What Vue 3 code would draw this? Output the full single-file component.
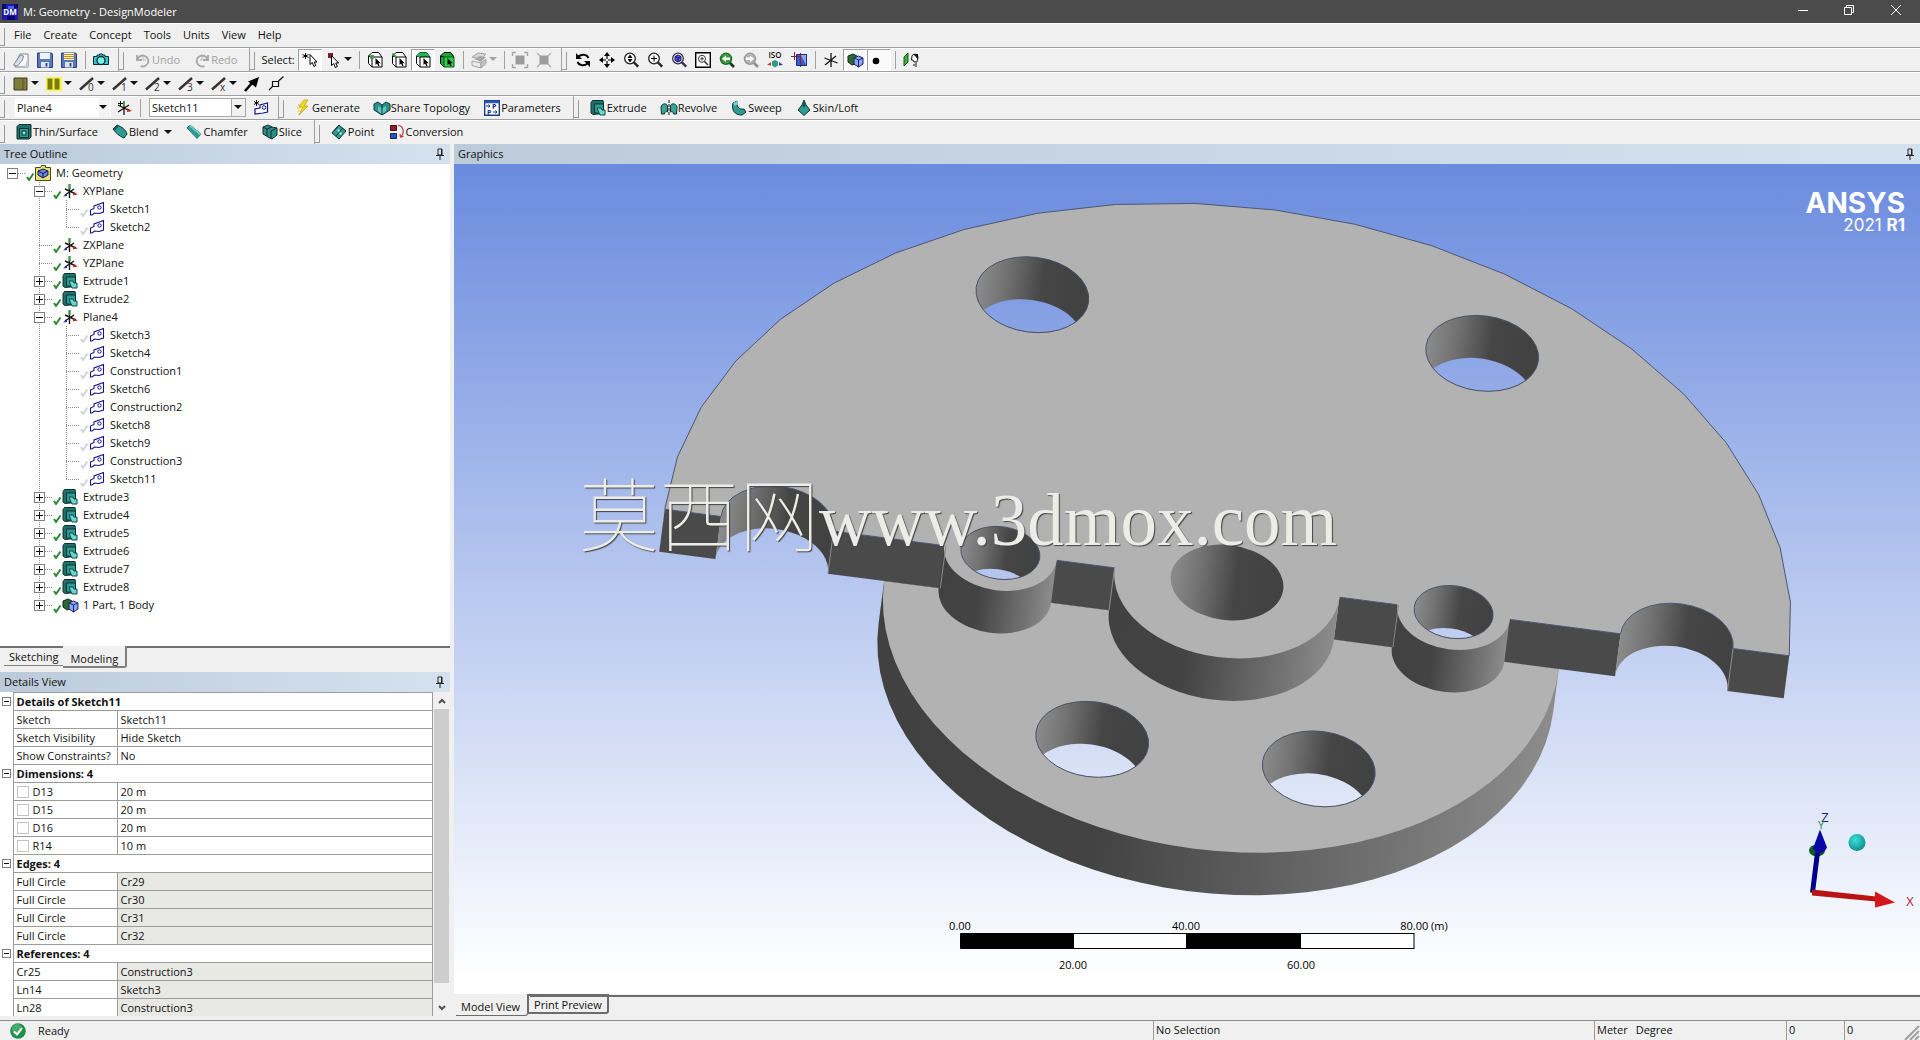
<script setup>
import { ref } from 'vue'

const menus = ['File', 'Create', 'Concept', 'Tools', 'Units', 'View', 'Help']

const cube = (fill) =>
  `<path d="M1 4.5 4.5 1H12l3 3v10.5H5L1 11z" fill="${fill}"/><path d="M1.500 4 5 .5h6.500L15 5M1.500 4v7.500L5 15M1.500 4l3.500 1" fill="none" stroke="#000"/>`
const cursor = '<path d="M8.500 6v7l1.600-1.400 1.200 2.600 1.200-.6-1.100-2.400h2.300z" fill="#000"/>'
const lens = (inner, color = '#222') =>
  `<circle cx="7" cy="6.500" r="5.300" fill="#fff" stroke="${color}" stroke-width="1.300"/><path d="m11 10.500 4.200 4.200" stroke="${color}" stroke-width="2.400"/>${inner}`
const edgeLine = (label) =>
  `<path d="M1 13.500 14 2" stroke="#333" stroke-width="2.400"/><text x="9" y="15" font-size="10" font-family="Open Sans, sans-serif" fill="#333">${label}</text>`

const icons = {
  app: '<rect width="16" height="16" fill="#1b1bb0"/><path d="M0 0h4v5H0zM12 0h4v4h-4zM5 12h8v4H5z" fill="#0a0a6e"/><path d="M6 2h6v3H6z" fill="#4a62e8"/><text x="8" y="11" font-size="8" font-weight="700" text-anchor="middle" font-family="Open Sans, sans-serif" fill="#fff">DM</text>',
  fresh: '<path d="M7 2h8v13H2v-3z" fill="#f8f8fb" stroke="#7a8294"/><path d="M12 15h3V3z" fill="#c2cad8"/><path d="m.5 13 7-10 3 1-1 4-5 6z" fill="#d8dde8" stroke="#8a90a0"/>',
  save: '<path d="M.5 1h14l1 1v13.500H.5z" fill="#5878b8" stroke="#2b437c"/><path d="M3 1h10v6H3z" fill="#eef3fb"/><path d="M4 10h8v5.500H4z" fill="#dce4f2"/><path d="M9.500 11v3.500" stroke="#2b437c" stroke-width="1.800"/>',
  saveas: '<path d="M.5 1h14l1 1v13.500H.5z" fill="#5878b8" stroke="#2b437c"/><path d="M3 1h10v7H3z" fill="#fff3d0"/><path d="M3 2.500h10M3 4.500h10M3 6.500h10" stroke="#d08a20"/><path d="M4 10h8v5.500H4z" fill="#dce4f2"/><path d="M9.500 11v3.500" stroke="#2b437c" stroke-width="1.800"/>',
  camera: '<path d="M.5 4.500H4V3h2.500V2h3v1H12v1.500h3.500v8H.5z" fill="#3cc0c8" stroke="#0b2f35"/><circle cx="8" cy="8.500" r="4" fill="#7df0ee" stroke="#0b2f35" stroke-width="1.300"/>',
  undo: '<path d="M2 3v5h5M2.500 7.500a5.500 5.500 0 1 1 3 6.500" fill="none" stroke="#a8a8a8" stroke-width="1.800"/><path d="M8 4v4h3" fill="none" stroke="#b8b8b8"/>',
  redo: '<path d="M14 3v5H9M13.500 7.500a5.500 5.500 0 1 0-3 6.500" fill="none" stroke="#a8a8a8" stroke-width="1.800"/><path d="M8 4v4H6" fill="none" stroke="#b8b8b8"/>',
  pick: '<path d="M3.500 1v6M.5 2.500l6 3M.5 5.500l6-3" stroke="#000"/><path d="M8 2.500v10l2.300-2 1.500 4 2-1-1.600-3.500H15z" fill="#fff" stroke="#000"/>',
  pickbox: '<path d="M2 1h5v5H2z" fill="#7a1f2c"/><path d="M5.500 3.500v10l2.300-2 1.500 4 2-1-1.600-3.500h2.900z" fill="#fff" stroke="#000"/>',
  selPoint: cube('#fff') + '<path d="M5 5h10v10H5z" fill="#fff" stroke="#000"/><circle cx="5" cy="5" r="2.300" fill="#3f9a4a"/>' + cursor,
  selEdge: cube('#fff') + '<path d="M5 5h10v10H5z" fill="#fff" stroke="#000"/><path d="M1.500 1.500 5 5" stroke="#3f9a4a" stroke-width="2"/>' + cursor,
  selFace: cube('#fff') + '<path d="M1 4 4.500.5H12L15 5H5z" fill="#22b455"/><path d="M5 5h10v10H5z" fill="#fff" stroke="#000"/>' + cursor,
  selBody: cube('#1fa83a') + '<path d="M5 5h10v10H5z" fill="#35c94f" stroke="#0a5a18"/>' + cursor,
  boxoff: '<path d="M1 5 7 1l8 1-5 5z" fill="#d8d8d8" stroke="#a4a4a4"/><path d="m3 7 6-3 6 1-5 5z" fill="#a8a8a8"/><path d="m1 9 9 2v5l-9-2.500z" fill="#ececec" stroke="#a4a4a4"/><path d="m10 11 5-4v4.500L10 16z" fill="#c4c4c4" stroke="#a4a4a4"/>',
  expand: '<path d="M3.500 3.500h9v9h-9z" fill="#9c9c9c"/><path d="M.5 4V.5H4M12 .5h3.500V4M15.500 12v3.500H12M4 15.500H.5V12" fill="none" stroke="#a6a6a6" stroke-width="1.400"/>',
  shrink: '<path d="M3.500 3.500h9v9h-9z" fill="#9c9c9c"/><path d="m1 1 3 3M15 1l-3 3M15 15l-3-3M1 15l3-3" stroke="#b0b0b0" stroke-width="1.400"/>',
  rotate: '<path d="M13.500 6C12 2.500 7 1.500 3.500 4.500M2.500 10c1.500 3.500 6.500 4.500 10 1.500" fill="none" stroke="#000" stroke-width="2"/><path d="M1 1v6h6zM15 15V9H9z" fill="#000"/>',
  pan: '<path d="M8 0 5 4h6zM8 16l-3-4h6zM0 8l4-3v6zM16 8l-4-3v6z" fill="#000"/><path d="M8 3v4M8 9v4M3 8h4M9 8h4" stroke="#000" stroke-width="1.200"/>',
  zoom: lens('<path d="M7 2.500 9.500 6h-5zM7 10.500 4.500 7h5z" fill="#000"/>'),
  zoomin: lens('<path d="M7 3.500v6M4 6.500h6" stroke="#000"/>'),
  zoomfit: lens('<path d="m7 3 3 1.500v4L7 10 4 8.500v-4z" fill="#5a5ae0" stroke="#12126a"/><path d="m4 4.500 3 1.500 3-1.500M7 6v4" stroke="#12126a" fill="none"/>', '#3a2f4a'),
  zoombox: '<path d="M.7.7h14.600v14.600H.7z" fill="#fff" stroke="#000" stroke-width="1.400"/><circle cx="7" cy="6.800" r="3.500" fill="none" stroke="#333"/><path d="m9.500 9.500 3.500 3.500" stroke="#333" stroke-width="1.600"/><path d="M7 5v3.600M5.300 6.800h3.500" stroke="#333"/>',
  zoomprev: '<circle cx="7" cy="6.800" r="5.600" fill="#3e9a3e" stroke="#1f6a24" stroke-width="1.300"/><path d="m11 11 4 4" stroke="#1a3a1c" stroke-width="2.600"/><path d="M3 6.800 7 3.500v2h4v2.600H7v2z" fill="#fff"/>',
  zoomnext: '<circle cx="7" cy="6.800" r="5.600" fill="#b4b4b4" stroke="#9a9a9a" stroke-width="1.300"/><path d="m11 11 4 4" stroke="#8e8e8e" stroke-width="2.600"/><path d="M11 6.800 7 3.500v2H3v2.600h4v2z" fill="#fff"/>',
  iso: '<text x="8" y="6" font-size="8" font-weight="600" text-anchor="middle" font-family="Open Sans, sans-serif" fill="#111">ISO</text><path d="m8 8 3 1.500v4L8 15.500l-3-2v-4z" fill="#2f9c8c"/><path d="m4 10-4 3 4 .5z" fill="#c0392b"/><path d="m12 10 4 3-4 .5z" fill="#1f3f9a"/>',
  lookat: '<path d="M5.500 2.500h10v11h-10z" fill="#3a5fc4"/><path d="M9.500 2.500h6v11z" fill="#8fa8ea"/><path d="M3.500 0v8M0 4.500h9M9.500 1v14" stroke="#8a1f3a"/><path d="M5.500 2.500h10v11h-10z" fill="none" stroke="#1a2f7a"/>',
  triad: '<path d="M8 1v14M2 13l11-9M1.500 6l13 5" stroke="#111" stroke-width="1.300"/>',
  axes: '<path d="M7.500 6v9M3 6l11 5M3 12l9-6" stroke="#161616" stroke-width="1.400"/><path d="M7.500 1v5" stroke="#3f9a4a" stroke-width="2.400"/><path d="m11 9 5 2.500-5 .8z" fill="#b03028"/><path d="m1 13.500 4-3.500v3z" fill="#2b2b9a"/>',
  bodies: '<path d="m1 4 5-2 4 2v7l-5 2-4-3z" fill="#2a6a30" stroke="#0e2f12"/><path d="m7 6 4.500-2L16 6v6l-4.500 3L7 12z" fill="#8aa6f4" stroke="#1a2568"/><path d="m7 6 4.500 2L16 6M11.500 8v7" fill="none" stroke="#1a2568"/>',
  dot: '<circle cx="5" cy="9" r="3.300" fill="#000"/>',
  face: '<path d="M1 5 5 1v9l-4 4z" fill="#3fae3f" stroke="#145a14"/><path d="M9 4c1-3 6-2 6 1.500 0 2-1 2.500-1 4.500h-3l-1-2H8.500z" fill="#fff" stroke="#111"/><path d="M10 2h5v6l-2-3z" fill="#111"/><path d="M10 13h2M13 11v4" stroke="#111"/>',
  plate1: '<path d="M1 2h13v12H1z" fill="#7c7c3c" stroke="#3f3f16"/><path d="M10 2v12" stroke="#55551f"/>',
  plate2: '<path d="M0 1h16v14H0z" fill="#f7f74a"/><path d="M1.500 2.500h5v11h-5zM8.500 2.500h5v11h-5z" fill="#7c7c10"/>',
  e0: edgeLine('0'), e1: edgeLine('1'), e2: edgeLine('2'), e3: edgeLine('3'), ex: edgeLine('x'),
  thick: '<path d="m1 15 7-8" stroke="#000" stroke-width="2.600"/><path d="M15 1 4 5.500l2.500 1.800L12 11.500z" fill="#000"/>',
  vertex: '<path d="M4.500 5.500h6v5h-6zM10.500 5 15.500.5M4.500 10.500 1 14" fill="none" stroke="#111" stroke-width="1.200"/>',
  newplane: '<path d="M8 4v11M2 5l12 6M2 12l11-7" stroke="#111" stroke-width="1.300"/><path d="M8 1v5" stroke="#3f9a4a" stroke-width="2"/><path d="m11 8 5 3-5 1z" fill="#b03028"/><path d="M4.500 1v5M2 3.500h5" stroke="#111"/>',
  sketch: '<path d="M1.500 14V9L5 7.500V5l9.500-3.500V11L10 12.500 5.500 12 3 14z" fill="#fff" stroke="#14148a" stroke-width="1.100"/><circle cx="10.500" cy="6.500" r="1.700" fill="none" stroke="#14148a"/>',
  newsketch: '<path d="M2 14V9l5-1V5l7.500-2v9L10 13z" fill="#fff" stroke="#14148a" stroke-width="1.200"/><path d="M3.500 0v6M1 1.500l5 3M1 4.500l5-3" stroke="#111"/><circle cx="11" cy="7.500" r="1.800" fill="none" stroke="#14148a"/>',
  bolt: '<path d="m9 0-5 7h4l-4 8 9-9H9l4-6z" fill="#f6dc18" stroke="#b39a10" stroke-width=".7"/><path d="M3 5h3M2 8h3M3 11h2" stroke="#e4c400"/>',
  share: '<path d="m0 4 4-2 4 3 4-3 4 2v6l-8 5-8-5z" fill="#2b9088" stroke="#0d3d3a"/><path d="m4 6 4 2.500L12 6v5l-4 3-4-3z" fill="#62c8be"/><path d="M8 5v10" stroke="#0d3d3a"/>',
  params: '<path d="M.7.7h14.600v14.600H.7z" fill="#fff" stroke="#1a3a8a" stroke-width="1.400"/><path d="M.7.7h14.600v2.600H.7z" fill="#2a55b0"/><path d="M2 6h4M4.500 4.500 6 6 4.500 7.500M9 12h4M11.500 10.500 13 12l-1.500 1.500" fill="none" stroke="#14307a"/><text x="8" y="9" font-size="7" font-weight="700" font-family="Open Sans, sans-serif" fill="#14307a">P</text><text x="3" y="15" font-size="7" font-weight="700" font-family="Open Sans, sans-serif" fill="#14307a">P</text>',
  extrude: '<path d="M1 2.500 2.500.5H13l.5 2v11L3 14.500 1 13z" fill="#1f6f6a" stroke="#0c3331"/><path d="M4.500 4h9v9h-9z" fill="#2f9c94" stroke="#0c3331"/><path d="M7 8h4l1 2h3v5h-5l-1-2z" fill="#6cd6cc" stroke="#0c4a46"/>',
  revolve: '<path d="M0 7c1-4 6-4 6.500-1v6c-2-1-3 0-3 2H.5zM16 7c-1-4-6-4-6.500-1v6c2-1 3 0 3 2h3z" fill="#3aa49a" stroke="#0c3331"/><path d="M8 0v16" stroke="#111" stroke-dasharray="3 1"/>',
  sweep: '<path d="M2 3 6 1c-1 5 2 9 7 8l2 3-4 3C4 15.500 0 10 2 3z" fill="#2f9c94" stroke="#0c3331"/><path d="m2 3 4-2 1 3-3 2z" fill="#6cd6cc"/>',
  skin: '<path d="m8 0 2 5 4 5-6 5.500L2 10l4-5z" fill="#2f9c94" stroke="#0c3331"/><path d="m8 0 2 5-2 3-2-3z" fill="#1c5a55"/>',
  thin: '<path d="M1 2.500 3 .5h12v12.500L13 15H1z" fill="#1f6f6a" stroke="#0c3331"/><path d="M3.500 4.500h9v9h-9z" fill="#2f9c94" stroke="#0c3331"/><path d="M6 7h4v4H6z" fill="#8fe0d8" stroke="#0c3331"/>',
  blend: '<path d="m1 5 4-4c5 2 9 5 10 9l-3 4C7 12 4 9 1 5z" fill="#2f9c94" stroke="#0c3331"/><path d="m1 5 4-4 2 1-4 4.500z" fill="#1c5a55"/>',
  chamfer: '<path d="m1 4 3-3 11 9-4 4.500z" fill="#2f9c94" stroke="#2c7a74"/><path d="m4 1 11 9-1 1L3 2z" fill="#7ad8ce"/>',
  slice: '<path d="m1 3 5-2 4 2 5 1v7l-5 4-4-2-5-3z" fill="#2f8c84" stroke="#0c3331"/><path d="m1 3 4 2v7M5 5l5-2M9 7l6-3M9 7v8" fill="none" stroke="#0c3331"/>',
  point: '<path d="M8 1 15 7 8 15 1 9z" fill="#2f9c94" stroke="#0c3331"/><path d="M1 9 8 1M5 12l7-8" stroke="#0c3331"/><path d="M6.500 5.500h2v2h-2zM8.500 8.500h2v2h-2z" fill="#b8f2ec"/>',
  convert: '<path d="M1.500 1.500h6v5h-6z" fill="#8a1f2c" stroke="#4a0d16"/><path d="M1.500 9.500h6v5h-6z" fill="#2a55b0" stroke="#12255a"/><path d="M9 1.500c6 0 6.500 8 3 11M11 10l.5 3 3-.5" fill="none" stroke="#c03a3a" stroke-width="1.200"/>',
  model: '<path d="M.5 2.500h5l1-2h4v2h5v13H.5z" fill="#e8de7a" stroke="#4a461a"/><path d="m8 4 5 2v4l-5 3-5-3V6z" fill="#6f86dc" stroke="#14204e"/><path d="m3 6 5 2.500L13 6M8 8.500V13" fill="none" stroke="#14204e"/>'
}

const b = (icon, extra = {}) => ({ icon, ...extra })
const sep = { sep: true }

const standardBar = [
  { items: [b('fresh', { tip: 'New' }), b('save', { tip: 'Save' }), b('saveas', { tip: 'Save As' }), sep, b('camera', { tip: 'Capture' })] },
  { items: [b('undo', { label: 'Undo', off: true }), b('redo', { label: 'Redo', off: true })] },
  {
    caption: 'Select:',
    items: [
      b('pick', { on: true, tip: 'New Selection' }), b('pickbox', { drop: true, tip: 'Select Mode' }), sep,
      b('selPoint', { tip: 'Points' }), b('selEdge', { tip: 'Edges' }), b('selFace', { on: true, tip: 'Faces' }), b('selBody', { tip: 'Bodies' }), sep,
      b('boxoff', { drop: true, off: true, tip: 'Extend' }), sep,
      b('expand', { off: true, tip: 'Expand' }), b('shrink', { off: true, tip: 'Shrink' })
    ]
  },
  {
    open: true,
    items: [
      b('rotate', { tip: 'Rotate' }), b('pan', { tip: 'Pan' }), b('zoom', { tip: 'Zoom' }), b('zoomin', { tip: 'Box Zoom' }),
      b('zoomfit', { tip: 'Zoom to Fit' }), b('zoombox', { tip: 'Magnifier' }), b('zoomprev', { tip: 'Previous View' }),
      b('zoomnext', { tip: 'Next View', off: true }), b('iso', { tip: 'Isometric' }), b('lookat', { tip: 'Look At' }), sep,
      b('triad', { tip: 'Display Plane' }), b('bodies', { on: true, tip: 'Display Model' }), b('dot', { on: true, tip: 'Display Points' }), sep,
      b('face', { tip: 'Look At Face' })
    ]
  }
]
const edgeBar = ['plate1', 'plate2', 'e0', 'e1', 'e2', 'e3', 'ex']
const featureBar = [
  { items: [b('bolt', { label: 'Generate' }), b('share', { label: 'Share Topology' }), b('params', { label: 'Parameters' })] },
  { open: true, items: [b('extrude', { label: 'Extrude' }), b('revolve', { label: 'Revolve' }), b('sweep', { label: 'Sweep' }), b('skin', { label: 'Skin/Loft' })] }
]
const modifyBar = [
  { items: [b('thin', { label: 'Thin/Surface' }), b('blend', { label: 'Blend', drop: true }), b('chamfer', { label: 'Chamfer' }), b('slice', { label: 'Slice' })] },
  { open: true, items: [b('point', { label: 'Point' }), b('convert', { label: 'Conversion' })] }
]

const plane = ref('Plane4')
const sketch = ref('Sketch11')

const leaf = (label) => ({ label, level: 2, icon: 'sketch' })
const closed = (label, icon = 'extrude') => ({ label, level: 1, icon, box: '+' })
const tree = [
  { label: 'M: Geometry', level: 0, icon: 'model', box: '-' },
  { label: 'XYPlane', level: 1, icon: 'axes', box: '-' },
  leaf('Sketch1'), { ...leaf('Sketch2'), last: true },
  { label: 'ZXPlane', level: 1, icon: 'axes' },
  { label: 'YZPlane', level: 1, icon: 'axes' },
  closed('Extrude1'), closed('Extrude2'),
  { label: 'Plane4', level: 1, icon: 'axes', box: '-' },
  ...['Sketch3', 'Sketch4', 'Construction1', 'Sketch6', 'Construction2', 'Sketch8', 'Sketch9', 'Construction3'].map(leaf),
  { ...leaf('Sketch11'), last: true },
  ...[3, 4, 5, 6, 7, 8].map((n) => closed('Extrude' + n)),
  { ...closed('1 Part, 1 Body', 'bodies'), last: true }
]

const details = [
  { title: 'Details of Sketch11', rows: [['Sketch', 'Sketch11'], ['Sketch Visibility', 'Hide Sketch'], ['Show Constraints?', 'No']] },
  { title: 'Dimensions: 4', check: true, rows: [['D13', '20 m'], ['D15', '20 m'], ['D16', '20 m'], ['R14', '10 m']] },
  { title: 'Edges: 4', locked: true, rows: [['Full Circle', 'Cr29'], ['Full Circle', 'Cr30'], ['Full Circle', 'Cr31'], ['Full Circle', 'Cr32']] },
  { title: 'References: 4', locked: true, rows: [['Cr25', 'Construction3'], ['Ln14', 'Sketch3'], ['Ln28', 'Construction3']] }
]

// The part is drawn in its own plane units (metres); the outer group projects them to the view.
const depth = 11.4
const halfRing = (r, cy, up, steps) =>
  Array.from({ length: steps + 1 }, (_, i) => {
    const a = (Math.PI * i) / steps
    return `${(-r * Math.cos(a)).toFixed(2)},${(cy + (up ? -1 : 1) * r * Math.sin(a)).toFixed(2)}`
  }).join(' ')
const notch = (x) => `A10 10 0 0 0 ${x} 0`
const platePath = `M-100 0L${halfRing(100, 0, true, 22).split(' ').slice(1, -1).join('L')}L100 0H90${notch(70)}H-70${notch(-90)}Z`
const bosses = [{ x: -40.3, r: 10 }, { x: 40.3, r: 10 }, { x: 0, r: 20 }]
const throughHoles = [
  { x: -40.6, y: -69.28, r: 10 }, { x: 39.4, y: -69.28, r: 10 },
  { x: -20, y: 34.64 + depth, r: 10 }, { x: 20.3, y: 34.64 + depth, r: 10 },
  { x: -40.3, y: 0, r: 7 }, { x: 40.3, y: 0, r: 7 }
]
const opening = ({ x, y, r }) => {
  const w = Math.sqrt(r * r - (depth / 2) ** 2)
  return `M${x - w} ${y + depth / 2}A${r} ${r} 0 0 1 ${x + w} ${y + depth / 2}A${r} ${r} 0 0 1 ${x - w} ${y + depth / 2}Z`
}
const bossWall = ({ x, r }) => `M${x - r} 0V${depth}A${r} ${r} 0 0 0 ${x + r} ${depth}V0Z`
const cutFaces = [[-100, 10], [-70, 20], [-31, 11], [20, 11], [50, 20], [90, 10]]
</script>

<template>
  <div class="app">
    <header class="title">
      <svg class="ic" viewBox="0 0 16 16" v-html="icons.app"></svg>
      <h1>M: Geometry - DesignModeler</h1>
      <div class="winbtns">
        <button aria-label="Minimize"><svg viewBox="0 0 12 12"><path d="M1 6.500h10" /></svg></button>
        <button aria-label="Restore"><svg viewBox="0 0 12 12"><path d="M1.500 3.500h7v7h-7zM3.500 3V1.500h7v7H9" /></svg></button>
        <button aria-label="Close"><svg viewBox="0 0 12 12"><path d="m1 1 10 10M11 1 1 11" /></svg></button>
      </div>
    </header>

    <nav class="bar menu">
      <span class="grip"></span>
      <button v-for="m in menus" :key="m">{{ m }}</button>
    </nav>

    <div class="bar">
      <div v-for="(g, i) in standardBar" :key="i" class="group" :class="{ open: g.open }">
        <span class="grip"></span>
        <span v-if="g.caption" class="caption">{{ g.caption }}</span>
        <template v-for="(t, j) in g.items" :key="j">
          <span v-if="t.sep" class="sep"></span>
          <button v-else class="tool" :class="{ on: t.on, drop: t.drop, off: t.off, text: t.label }" :aria-label="t.tip || t.label">
            <svg class="ic" viewBox="0 0 16 16" v-html="icons[t.icon]"></svg>
            <span v-if="t.label">{{ t.label }}</span>
            <svg v-if="t.drop" class="arrow" viewBox="0 0 8 5"><path d="M0 0h8L4 4z" /></svg>
          </button>
        </template>
      </div>
    </div>

    <div class="bar">
      <div class="group open">
        <span class="grip"></span>
        <button v-for="e in edgeBar" :key="e" class="tool drop" aria-label="Edge display">
          <svg class="ic" viewBox="0 0 16 16" v-html="icons[e]"></svg>
          <svg class="arrow" viewBox="0 0 8 5"><path d="M0 0h8L4 4z" /></svg>
        </button>
        <button class="tool" aria-label="Edge direction"><svg class="ic" viewBox="0 0 16 16" v-html="icons.thick"></svg></button>
        <button class="tool" aria-label="Show vertices"><svg class="ic" viewBox="0 0 16 16" v-html="icons.vertex"></svg></button>
      </div>
    </div>

    <div class="bar">
      <div class="group">
        <span class="grip"></span>
        <span class="combo flat">
          <select v-model="plane" aria-label="Active plane"><option>Plane4</option><option>XYPlane</option></select>
          <svg class="arrow" viewBox="0 0 8 5"><path d="M0 0h8L4 4z" /></svg>
        </span>
        <button class="tool" aria-label="New plane"><svg class="ic" viewBox="0 0 16 16" v-html="icons.newplane"></svg></button>
        <span class="sep"></span>
        <span class="combo">
          <select v-model="sketch" aria-label="Active sketch"><option>Sketch11</option><option>Sketch9</option></select>
          <svg class="arrow" viewBox="0 0 8 5"><path d="M0 0h8L4 4z" /></svg>
        </span>
        <button class="tool" aria-label="New sketch"><svg class="ic" viewBox="0 0 16 16" v-html="icons.newsketch"></svg></button>
      </div>
      <div v-for="(g, i) in featureBar" :key="i" class="group" :class="{ open: g.open }">
        <span class="grip"></span>
        <button v-for="t in g.items" :key="t.label" class="tool text">
          <svg class="ic" viewBox="0 0 16 16" v-html="icons[t.icon]"></svg><span>{{ t.label }}</span>
        </button>
      </div>
    </div>

    <div class="bar lastbar">
      <div v-for="(g, i) in modifyBar" :key="i" class="group" :class="{ open: g.open }">
        <span class="grip"></span>
        <button v-for="t in g.items" :key="t.label" class="tool text">
          <svg class="ic" viewBox="0 0 16 16" v-html="icons[t.icon]"></svg><span>{{ t.label }}</span>
          <svg v-if="t.drop" class="arrow" viewBox="0 0 8 5"><path d="M0 0h8L4 4z" /></svg>
        </button>
      </div>
    </div>

    <main class="work">
      <aside class="side">
        <h2 class="head">
          Tree Outline
          <svg class="pin" viewBox="0 0 8 12"><path d="M2 1h4v6H2zM0 7.500h8M4 8v4M5.500 1v6" /></svg>
        </h2>
        <ul class="tree">
          <li v-for="(n, i) in tree" :key="i" :class="['l' + n.level, { last: n.last, boxed: n.box }]">
            <span v-if="n.box" class="box" :class="{ plus: n.box === '+' }"></span>
            <span class="dots"></span>
            <svg class="tick" :class="{ faint: n.level === 2 }" viewBox="0 0 9 9"><path d="m1 5 2 3 4.500-6.500" /></svg>
            <svg class="ic" viewBox="0 0 16 16" v-html="icons[n.icon]"></svg>
            <span class="name">{{ n.label }}</span>
          </li>
        </ul>
        <div class="tabs sidetabs">
          <button class="tab">Sketching</button>
          <button class="tab current">Modeling</button>
        </div>
        <h2 class="head">
          Details View
          <svg class="pin" viewBox="0 0 8 12"><path d="M2 1h4v6H2zM0 7.500h8M4 8v4M5.500 1v6" /></svg>
        </h2>
        <div class="details">
          <table>
            <colgroup><col class="c0" /><col class="c1" /><col /></colgroup>
            <tbody v-for="s in details" :key="s.title">
              <tr>
                <td class="gut"><span class="box small"></span></td>
                <th colspan="2">{{ s.title }}</th>
              </tr>
              <tr v-for="(r, i) in s.rows" :key="i">
                <td class="gut"></td>
                <td>
                  <label v-if="s.check"><input type="checkbox" />{{ r[0] }}</label>
                  <template v-else>{{ r[0] }}</template>
                </td>
                <td :class="{ locked: s.locked }">{{ r[1] }}</td>
              </tr>
            </tbody>
          </table>
          <div class="scroll">
            <svg viewBox="0 0 8 6"><path d="m1 5 3-3 3 3" /></svg>
            <span class="thumb"></span>
            <svg viewBox="0 0 8 6"><path d="m1 1 3 3 3-3" /></svg>
          </div>
        </div>
      </aside>

      <section class="view">
        <h2 class="head">
          Graphics
          <svg class="pin" viewBox="0 0 8 12"><path d="M2 1h4v6H2zM0 7.500h8M4 8v4M5.500 1v6" /></svg>
        </h2>
        <div class="canvas">
          <svg class="scene" viewBox="454 164 1466 829">
            <defs>
              <linearGradient id="bore"><stop offset="0" stop-color="#8c8c8c" /><stop offset=".25" stop-color="#727272" /><stop offset=".58" stop-color="#454545" /><stop offset="1" stop-color="#414141" /></linearGradient>
              <linearGradient id="wall"><stop offset="0" stop-color="#414141" /><stop offset=".36" stop-color="#434343" /><stop offset=".75" stop-color="#6e6e6e" /><stop offset="1" stop-color="#8c8c8c" /></linearGradient>
              <radialGradient id="ball" cx=".4" cy=".35" r=".7"><stop offset="0" stop-color="#3fe0dc" /><stop offset="1" stop-color="#0b8a88" /></radialGradient>
              <mask id="openings" maskUnits="userSpaceOnUse" x="-110" y="-110" width="220" height="220">
                <rect x="-110" y="-110" width="220" height="220" fill="#fff" />
                <path v-for="(h, i) in throughHoles" :key="i" :d="opening(h)" fill="#000" />
              </mask>
            </defs>
            <g transform="translate(1227 582) rotate(7.43) scale(5.67 3.756)">
              <g mask="url(#openings)">
                <polygon :points="`-60,${depth} ${halfRing(60, depth * 2, false, 44)} 60,${depth}`" fill="url(#wall)" />
                <polygon :points="halfRing(60, depth, false, 44)" fill="#b2b2b2" />
                <rect v-for="f in cutFaces" :key="f[0]" :x="f[0]" y="0" :width="f[1]" :height="depth" fill="#4a4a4a" />
                <path v-for="x in [-80, 80]" :key="x" :d="`M${x - 10} 0A10 10 0 0 1 ${x + 10} 0V${depth}A10 10 0 0 0 ${x - 10} ${depth}Z`" fill="url(#bore)" />
                <path class="edge" :d="platePath" fill="#b2b2b2" />
                <path v-for="s in bosses" :key="s.x" :d="bossWall(s)" fill="url(#wall)" />
                <circle v-for="s in bosses" :key="s.x" :cx="s.x" cy="0" :r="s.r" fill="#b2b2b2" />
                <circle cx="0" cy="0" r="10" fill="url(#bore)" />
                <circle v-for="(h, i) in throughHoles" :key="i" :cx="h.x" :cy="h.y" :r="h.r" fill="url(#bore)" />
              </g>
              <circle v-for="(h, i) in throughHoles" :key="i" class="rim" :cx="h.x" :cy="h.y" :r="h.r" />
              <path class="seam" d="M-70 0V11.400M-50 0V11.400M-20 0V11.400M30.500 0V11.400M90 0V11.400" />
            </g>

            <g class="ruler">
              <rect x="961" y="933" width="453" height="15" fill="#fff" stroke="#000" stroke-width="1" />
              <path d="M960 933h114v15H960zM1186 933h115v15h-115z" />
              <text x="960" y="929">0.00</text>
              <text x="1186" y="929">40.00</text>
              <text x="1424" y="929">80.00 (m)</text>
              <text x="1073" y="968">20.00</text>
              <text x="1301" y="968">60.00</text>
            </g>

            <g class="compass">
              <ellipse cx="1817" cy="850" rx="8" ry="6" fill="#0e5a2a" />
              <path d="M1810 892l5-40h5l-5 40z" fill="#00008a" />
              <path d="M1820 829l7 18c-3 7-11 7-14 1z" fill="#0808a4" />
              <path d="M1812 889l64 7v5l-64-6z" fill="#b81414" />
              <path d="M1875 891l20 11-20 5z" fill="#d21818" />
              <circle cx="1857" cy="842" r="8.500" fill="url(#ball)" />
              <text x="1825" y="821" fill="#1c1c6c">Z</text>
              <text x="1821" y="828" fill="#2c8a4c" class="y">Y</text>
              <text x="1910" y="905" fill="#b02040">X</text>
            </g>

            <text class="mark" x="579" y="544"><tspan class="han">莫西网</tspan><tspan class="latin">www.3dmox.com</tspan></text>
          </svg>
          <div class="brand">
            <strong>ANSYS</strong>
            <span>2021 <b>R1</b></span>
          </div>
        </div>
        <div class="tabs viewtabs">
          <button class="tab current">Model View</button>
          <button class="tab">Print Preview</button>
        </div>
      </section>
    </main>

    <footer class="status">
      <span class="ready">
        <svg class="ic" viewBox="0 0 16 16"><circle cx="8" cy="8" r="7.800" fill="#1f8f4c" /><circle cx="7" cy="6" r="5" fill="#45ad6c" /><path d="m4 8.500 3 3 5-6.500" fill="none" stroke="#fff" stroke-width="2" /></svg>
        Ready
      </span>
      <span class="pane sel">No Selection</span>
      <span class="pane units"><span>Meter</span><span>Degree</span></span>
      <span class="pane num">0</span>
      <span class="pane num">0</span>
      <svg class="corner" viewBox="0 0 16 16"><path d="M2 16 16 2M7 16l9-9M12 16l4-4" /></svg>
    </footer>
  </div>
</template>

<style>
body {
  margin: 0;
  background: #f0f0f0;
}
</style>

<style scoped>
.app {
  display: flex;
  flex-direction: column;
  height: 100vh;
  overflow: hidden;
  background: #f0f0f0;
  color: #111;
  font: 11px/18px "Open Sans", "Noto Sans", "Noto Sans CJK SC", sans-serif;
}
button {
  font: inherit;
  color: inherit;
  border: 0;
  background: none;
  padding: 0;
}
h1, h2 {
  margin: 0;
  font-size: 11px;
  font-weight: 400;
}
.ic {
  width: 16px;
  height: 16px;
  flex: none;
  overflow: visible;
}
.title {
  display: flex;
  align-items: center;
  gap: 5px;
  height: 23px;
  padding-left: 2px;
  background: #4b4b4b;
  color: #fff;
}
.winbtns {
  display: flex;
  margin-left: auto;
}
.winbtns button {
  width: 46px;
  height: 20px;
}
.winbtns button:last-child {
  width: 48px;
}
.winbtns svg {
  width: 12px;
  height: 12px;
  fill: none;
  stroke: #fff;
}
.bar {
  display: flex;
  box-sizing: border-box;
  height: 24px;
  border-bottom: 1px solid #a0a0a0;
  box-shadow: inset 0 1px #fff;
}
.lastbar {
  border-bottom: 0;
}
.menu {
  height: 25px;
  align-items: center;
}
.menu button {
  margin-left: 5px;
  margin-right: 7px;
}
.grip {
  box-sizing: border-box;
  flex: none;
  width: 5px;
  height: 18px;
  margin: 3px 4px 0 0;
  border-right: 1px solid #9a9a9a;
  border-bottom: 1px solid #9a9a9a;
}
.group {
  display: flex;
  align-items: center;
  padding-right: 5px;
  border-right: 1px solid #a0a0a0;
}
.group.open {
  border-right: 0;
}
.caption {
  width: 37px;
  padding-left: 2px;
}
.tool {
  display: flex;
  align-items: center;
  justify-content: center;
  box-sizing: border-box;
  width: 24px;
  height: 22px;
}
.tool.text {
  width: auto;
  gap: 1px;
  padding: 0 7px;
}
.tool.drop {
  width: 33px;
  gap: 2px;
}
.tool.text.drop {
  width: auto;
}
.tool.on {
  background: #fafafa;
  border: 1px solid;
  border-color: #a0a0a0 #fff #fff #a0a0a0;
}
.tool.off {
  color: #a2a2a2;
}
.arrow {
  width: 8px;
  height: 5px;
  flex: none;
  fill: #111;
}
.off .arrow {
  fill: #a0a0a0;
}
.text .arrow {
  margin-left: 5px;
}
.sep {
  width: 8px;
  height: 18px;
  background: linear-gradient(#a0a0a0, #a0a0a0) 4px 0 / 1px 100% no-repeat;
}
.combo {
  display: grid;
  align-items: center;
  width: 97px;
  height: 19px;
  margin: 0 3px 0 5px;
  box-sizing: border-box;
  border: 1px solid #a8a8a8;
  background: linear-gradient(90deg, #fff 81px, #a8a8a8 81px, #a8a8a8 82px, #f0f0f0 82px);
}
.combo.flat {
  margin-right: 1px;
  border-color: transparent;
  background: linear-gradient(90deg, #fff 84px, #f4f4f4 84px);
}
.combo > * {
  grid-area: 1 / 1;
}
.combo select {
  appearance: none;
  border: 0;
  background: none;
  padding: 0 2px;
  font: inherit;
  color: inherit;
  height: 17px;
  line-height: 17px;
}
.combo .arrow {
  justify-self: end;
  margin-right: 3px;
  pointer-events: none;
}
.work {
  flex: 1;
  display: flex;
  min-height: 0;
  padding-bottom: 4px;
}
.side {
  display: flex;
  flex-direction: column;
  width: 450px;
  flex: none;
}
.head {
  display: flex;
  align-items: center;
  justify-content: space-between;
  flex: none;
  height: 20px;
  padding: 0 6px 0 4px;
  background: linear-gradient(90deg, #bccbda, #d4e2f0);
}
.pin {
  width: 8px;
  height: 12px;
  fill: none;
  stroke: #222;
}
.tree {
  flex: 482 1 0;
  min-height: 0;
  overflow: hidden;
  margin: 0;
  padding: 0;
  list-style: none;
  background: #fff;
  border-bottom: 2px solid #707070;
}
.tree li {
  --v: repeating-linear-gradient(#8a8a8a 0 1px, transparent 1px 2px);
  display: flex;
  align-items: center;
  height: 18px;
}
.tree .l0 {
  padding-left: 7px;
}
.tree .l1 {
  padding-left: 39px;
  background: var(--v) 39px 0 / 1px 100% no-repeat;
}
.tree .l1.boxed {
  padding-left: 34px;
}
.tree .l1.last {
  background-size: 1px 50%;
}
.tree .l2 {
  padding-left: 66px;
  background: var(--v) 39px 0 / 1px 100% no-repeat, var(--v) 66px 0 / 1px 100% no-repeat;
}
.tree .l2.last {
  background-size: 1px 100%, 1px 50%;
}
.box {
  box-sizing: border-box;
  width: 11px;
  height: 11px;
  flex: none;
  border: 1px solid #808080;
  background: linear-gradient(#111, #111) center / 7px 1px no-repeat, #fff;
}
.box.plus {
  background: linear-gradient(#111, #111) center / 7px 1px no-repeat, linear-gradient(#111, #111) center / 1px 7px no-repeat, #fff;
}
.box.small {
  display: block;
  width: 9px;
  height: 9px;
  margin-left: 2px;
  background-size: 5px 1px;
}
.dots {
  width: 14px;
  height: 1px;
  background: repeating-linear-gradient(90deg, #8a8a8a 0 1px, transparent 1px 2px);
}
.box + .dots {
  width: 8px;
}
.tick {
  width: 9px;
  height: 9px;
  margin-top: 6px;
  flex: none;
  fill: none;
  stroke: #2c8a34;
  stroke-width: 2;
}
.tick.faint {
  stroke: #d2d6d2;
}
.name {
  margin-left: 5px;
}
.tabs {
  display: flex;
  align-items: flex-start;
  flex: none;
}
.sidetabs {
  height: 24px;
  padding-left: 4px;
}
.tab {
  box-sizing: border-box;
  height: 18px;
  padding: 0 5px;
  border: 1px solid #808080;
  border-width: 0 0 1px;
}
.sidetabs .current {
  height: 22px;
  margin-top: -2px;
  padding: 4px 7px 0;
  border-width: 0 2px 2px 0;
  border-radius: 0 0 3px;
  background: #f0f0f0;
}
.details {
  display: flex;
  flex: 324 1 0;
  min-height: 0;
  overflow: hidden;
  background: #fff;
}
table {
  flex: 1;
  align-self: flex-start;
  table-layout: fixed;
  border-collapse: collapse;
}
.c0 {
  width: 13px;
}
.c1 {
  width: 104px;
}
td, th {
  box-sizing: border-box;
  height: 18px;
  padding: 0 0 0 3px;
  border: 1px solid #9c9c9c;
  line-height: 17px;
  text-align: left;
  white-space: nowrap;
}
.gut {
  padding: 0;
  border-width: 0 1px 0 0;
}
td.locked {
  background: #e8e8e4;
}
td label {
  display: flex;
  align-items: center;
  gap: 4px;
}
td input {
  appearance: none;
  box-sizing: border-box;
  width: 12px;
  height: 12px;
  margin: 0;
  border: 1px solid #c4c4c4;
  background: #fff;
}
.scroll {
  display: flex;
  flex-direction: column;
  align-items: center;
  width: 17px;
  background: #f0f0f0;
}
.scroll svg {
  width: 8px;
  height: 6px;
  margin: 6px 0 5px;
  fill: none;
  stroke: #505050;
  stroke-width: 2;
}
.thumb {
  flex: 1;
  width: 15px;
  margin-bottom: 16px;
  background: #cdcdcd;
}
.view {
  display: flex;
  flex-direction: column;
  flex: 1;
  min-width: 0;
  margin-left: 4px;
}
.canvas {
  position: relative;
  flex: 1;
  min-height: 0;
  background: linear-gradient(#6a8bde, #fff 98%);
}
.scene {
  display: block;
  width: 100%;
  height: 100%;
}
.edge {
  stroke: #4c5674;
  vector-effect: non-scaling-stroke;
}
.rim {
  fill: none;
  stroke: #4a5264;
  vector-effect: non-scaling-stroke;
}
.seam {
  fill: none;
  stroke: #8a8a8a;
  vector-effect: non-scaling-stroke;
}
.ruler text {
  font-size: 11px;
  text-anchor: middle;
}
.compass text {
  font-size: 13px;
  text-anchor: middle;
}
.compass .y {
  font-size: 11px;
}
.mark {
  fill: #ecece8;
  text-shadow: 1px 1px 1px #444;
}
.han {
  font: 100 80px "Noto Sans CJK SC", sans-serif;
}
.latin {
  font: 73px "Liberation Serif", serif;
}
.brand {
  position: absolute;
  top: 26px;
  right: 15px;
  display: flex;
  flex-direction: column;
  align-items: flex-end;
  color: #fff;
  font-family: Inter, sans-serif;
}
.brand strong {
  font-size: 28px;
  line-height: 26px;
}
.brand span {
  font-size: 17px;
  line-height: 18px;
}
.viewtabs {
  height: 22px;
  background: linear-gradient(#6c6c6c, #6c6c6c) 76px 1px / 100% 2px no-repeat;
}
.viewtabs .tab {
  height: 20px;
  padding: 0 5px;
  border-width: 2px 2px 2px 1px;
  border-color: #6c6c6c;
  border-radius: 0 0 3px;
}
.viewtabs .current {
  height: 22px;
  margin-left: 2px;
  padding: 4px 7px 0 5px;
  border-width: 0 1px 1px 0;
}
.status {
  display: flex;
  flex: none;
  height: 20px;
  box-sizing: border-box;
  border-top: 1px solid #8c8c8c;
}
.status > * {
  box-sizing: border-box;
}
.ready {
  display: flex;
  flex: 1;
  align-items: center;
  gap: 12px;
  padding-left: 10px;
}
.pane {
  padding-left: 2px;
  border-left: 1px solid #9c9c9c;
}
.sel {
  width: 441px;
}
.units {
  display: flex;
  gap: 8px;
  width: 192px;
}
.num {
  width: 58px;
}
.corner {
  align-self: flex-end;
  width: 18px;
  height: 16px;
  fill: none;
  stroke: #a0a0a0;
  stroke-width: 2;
}
</style>
